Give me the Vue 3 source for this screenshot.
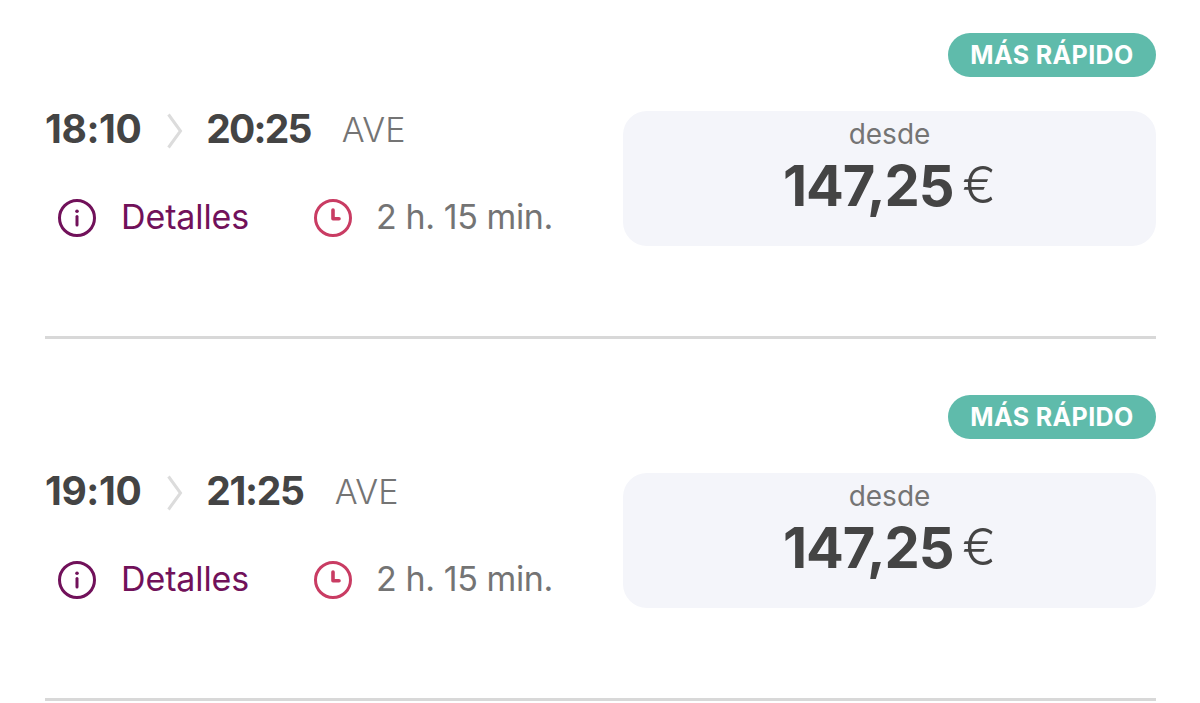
<!-- src/components/trains/TrainList.vue -->
<template>
  <ul class="train-list">
    <li v-for="train in trains" :key="train.departure" class="train">
      <div class="train-badge">
        <span class="badge">Más rápido</span>
      </div>
      <div class="train-body">
        <div class="train-info">
          <div class="schedule">
            <span class="time">{{ train.departure }}</span>
            <svg class="chevron" width="16" height="36" viewBox="0 0 16 36">
              <path d="M1.5 1.5 L13.5 18 L1.5 34.5" />
            </svg>
            <span class="time time-arrival">{{ train.arrival }}</span>
            <span class="service">{{ train.service }}</span>
          </div>
          <div class="meta">
            <a class="details">
              <svg class="icon" width="40" height="40" viewBox="0 0 40 40">
                <circle cx="20" cy="20" r="17.5" />
                <path d="M20 18.5 V27" />
                <circle class="dot" cx="20" cy="13.3" r="1.8" />
              </svg>
              <span class="details-label">Detalles</span>
            </a>
            <svg class="icon icon-clock" width="40" height="40" viewBox="0 0 40 40">
              <circle cx="20" cy="20" r="17.5" />
              <path class="hands" d="M20 12 V20.8 H26" />
            </svg>
            <span class="duration">{{ train.duration }}</span>
          </div>
        </div>
        <div class="price-card">
          <span class="price-from">desde</span>
          <div class="price">
            <span class="amount">{{ train.price }}</span>
            <span class="currency">€</span>
          </div>
        </div>
      </div>
    </li>
  </ul>
</template>

<script setup>
const trains = [
  { departure: '18:10', arrival: '20:25', service: 'AVE', duration: '2 h. 15 min.', price: '147,25' },
  { departure: '19:10', arrival: '21:25', service: 'AVE', duration: '2 h. 15 min.', price: '147,25' }
]
</script>

<style>
body {
  background: #fff;
  overflow: hidden;
}
</style>

<style scoped>
.train-list {
  list-style: none;
  margin: 0;
  padding: 33px 44px 0 45px;
  display: flex;
  flex-direction: column;
  gap: 56px;
  font-family: Inter, "Liberation Sans", sans-serif;
  color: #747474;
}

.train {
  box-sizing: border-box;
  height: 306px;
  border-bottom: 3px solid #d8d8d8;
}

.train-badge {
  display: flex;
  justify-content: flex-end;
}

.badge {
  box-sizing: border-box;
  width: 208px;
  height: 44px;
  border-radius: 22px;
  background: #5fbbab;
  color: #fff;
  font-size: 25px;
  font-weight: 700;
  letter-spacing: 0.4px;
  line-height: 44px;
  text-align: center;
  text-transform: uppercase;
  white-space: nowrap;
}

.train-body {
  display: flex;
  justify-content: space-between;
  margin-top: 34px;
}

.train-info {
  display: flex;
  flex-direction: column;
}

.schedule {
  display: flex;
  align-items: center;
  height: 36px;
  white-space: nowrap;
}

.time {
  color: #444;
  font-size: 39px;
  font-weight: 700;
  letter-spacing: -0.4px;
  line-height: 36px;
}

.time-arrival {
  letter-spacing: -1.8px;
}

.train:nth-child(2) .time-arrival {
  letter-spacing: -1.3px;
}

.chevron {
  margin: 3px 23px 0 26px;
  fill: none;
  stroke: #dcdcdc;
  stroke-width: 3;
}

.service {
  margin-left: 31px;
  padding-top: 2px;
  font-size: 34px;
  font-weight: 300;
  line-height: 36px;
}

.meta {
  display: flex;
  align-items: center;
  height: 40px;
  margin: 51px 0 0 12px;
  font-size: 34px;
  line-height: 38px;
  white-space: nowrap;
}

.details {
  display: flex;
  width: 256px;
  color: #71115a;
}

.details-label {
  margin-left: 24px;
  letter-spacing: -0.1px;
}

.icon {
  flex-shrink: 0;
  fill: none;
  stroke: #71115a;
  stroke-width: 3;
  stroke-linecap: round;
  stroke-linejoin: round;
}

.dot {
  fill: #71115a;
  stroke: none;
}

.icon-clock {
  stroke: #c93c63;
}

.hands {
  stroke-width: 3.6;
}

.duration {
  margin-left: 23px;
  padding-bottom: 2px;
  letter-spacing: -0.4px;
}

.price-card {
  box-sizing: border-box;
  width: 533px;
  height: 135px;
  padding-top: 7px;
  border-radius: 24px;
  background: #f4f5fa;
  text-align: center;
}

.price-from {
  display: block;
  font-size: 28px;
  line-height: 32px;
}

.price {
  display: flex;
  justify-content: center;
  align-items: flex-start;
  color: #444;
}

.amount {
  font-size: 56px;
  font-weight: 700;
  letter-spacing: -1.2px;
  line-height: 72px;
}

.currency {
  margin-left: 9px;
  font-size: 50px;
  font-weight: 300;
  line-height: 71px;
}
</style>
